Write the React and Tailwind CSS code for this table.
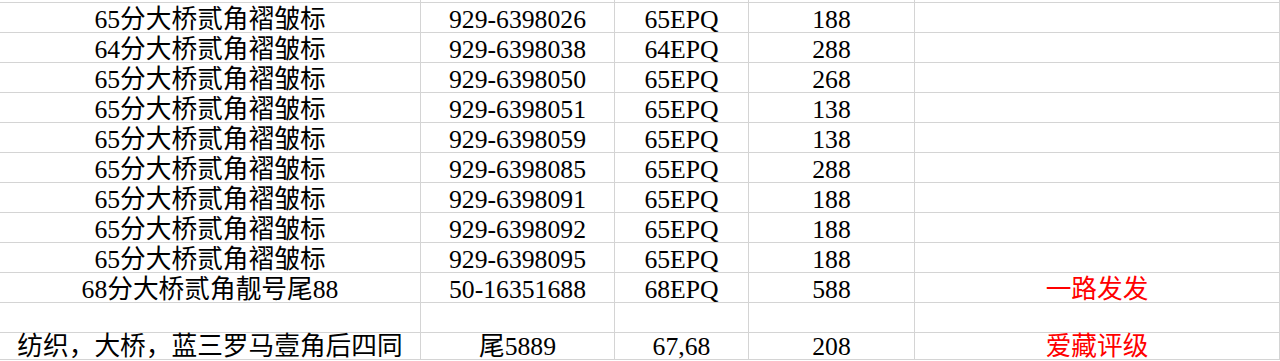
import React from 'react'

const rows = [
  ['65分大桥贰角褶皱标', '929-6398026', '65EPQ', '188', ''],
  ['64分大桥贰角褶皱标', '929-6398038', '64EPQ', '288', ''],
  ['65分大桥贰角褶皱标', '929-6398050', '65EPQ', '268', ''],
  ['65分大桥贰角褶皱标', '929-6398051', '65EPQ', '138', ''],
  ['65分大桥贰角褶皱标', '929-6398059', '65EPQ', '138', ''],
  ['65分大桥贰角褶皱标', '929-6398085', '65EPQ', '288', ''],
  ['65分大桥贰角褶皱标', '929-6398091', '65EPQ', '188', ''],
  ['65分大桥贰角褶皱标', '929-6398092', '65EPQ', '188', ''],
  ['65分大桥贰角褶皱标', '929-6398095', '65EPQ', '188', ''],
  ['68分大桥贰角靓号尾88', '50-16351688', '68EPQ', '588', '一路发发'],
  ['', '', '', '', ''],
  ['纺织，大桥，蓝三罗马壹角后四同', '尾5889', '67,68', '208', '爱藏评级'],
]

const Cell = ({ children, red }) => (
  <div className={`border-r border-b border-[#d4d4d4] flex items-end justify-center whitespace-nowrap ${red ? 'text-[#ff0000]' : 'text-black'}`}>
    <span className="leading-[24px]">{children}</span>
  </div>
)

const App = () => {
  return (
    <div className="w-[1280px] h-[361px] bg-white overflow-hidden text-[25.7px] font-[Liberation_Serif,Noto_Sans_CJK_SC,serif]">
      <div className="grid grid-cols-[421px_194px_134px_166px_365px] grid-rows-[3px_repeat(11,30px)_27px]">
        {/* cut-off row above */}
        {[0, 1, 2, 3, 4].map((i) => (
          <div key={i} className="border-r border-b border-[#d4d4d4]"></div>
        ))}

        {rows.map((r, i) => (
          <React.Fragment key={i}>
            <Cell>{r[0]}</Cell>
            <Cell>{r[1]}</Cell>
            <Cell>{r[2]}</Cell>
            <Cell>{r[3]}</Cell>
            <Cell red>{r[4]}</Cell>
          </React.Fragment>
        ))}
      </div>
    </div>
  )
}

export default App
